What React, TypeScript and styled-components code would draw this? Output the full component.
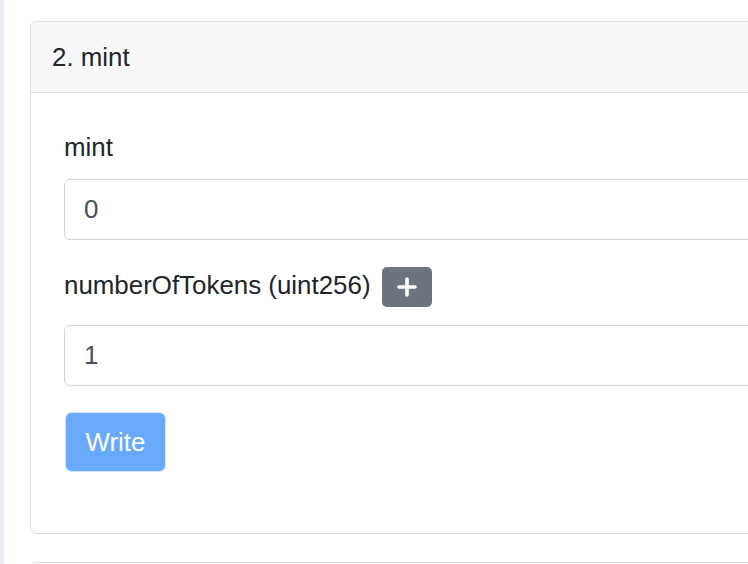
import React from "react";
import styled, { createGlobalStyle } from "styled-components";

const Global = createGlobalStyle`
  html, body {
    margin: 0;
    padding: 0;
    background: #ffffff;
    overflow: hidden;
  }
  body {
    font-family: "Liberation Sans", Arial, Helvetica, sans-serif;
    color: #212529;
  }
  * { box-sizing: border-box; }
`;

const Page = styled.div`
  display: flex;
  flex-direction: column;
  width: 1000px;
  min-height: 564px;
  border-left: 4px solid #eceef6;
  padding: 21px 0 0 26px;
`;

const Card = styled.section<{ $minHeight?: number }>`
  width: 900px;
  min-height: ${(p) => (p.$minHeight ? `${p.$minHeight}px` : "0")};
  border: 1px solid #dfdfdf;
  border-radius: 6px;
  margin-bottom: 28px;
  background: #ffffff;
  overflow: hidden;
`;

const CardHeader = styled.header`
  padding: 16px 21px;
  font-size: 25.9px;
  line-height: 38px;
  background: #f7f8fa;
  border-bottom: 1px solid #dfdfdf;
  color: #212529;
`;

const CardBody = styled.div`
  padding: 35px 33px 61px 33px;
`;

const Label = styled.label`
  display: block;
  font-size: 25.9px;
  line-height: 38px;
  margin-bottom: 13px;
  color: #212529;
`;

const LabelRow = styled.div`
  display: flex;
  align-items: flex-start;
  gap: 11px;
  margin-bottom: 18px;
`;

const LabelText = styled.span`
  font-size: 25.9px;
  line-height: 38px;
  color: #212529;
`;

const AddButton = styled.button`
  display: flex;
  align-items: center;
  justify-content: center;
  width: 50px;
  height: 40px;
  margin-top: 1px;
  padding: 0;
  border: none;
  border-radius: 5px;
  background: #6c757d;
  cursor: pointer;
`;

const Input = styled.input`
  display: block;
  width: 100%;
  height: 61px;
  padding: 0 19px;
  border: 1px solid #ced4da;
  border-radius: 6px;
  font-family: "Liberation Sans", Arial, Helvetica, sans-serif;
  font-size: 25.9px;
  color: #495057;
  background: #ffffff;
  margin-bottom: 26px;
  outline: none;
`;

const WriteButton = styled.button`
  height: 60px;
  margin-left: 1px;
  padding: 0 19.5px;
  border: 1px solid #d4e5fd;
  border-radius: 6px;
  background: #69a9fc;
  background-clip: padding-box;
  color: #ffffff;
  font-family: "Liberation Sans", Arial, Helvetica, sans-serif;
  font-size: 25.9px;
  line-height: 38px;
  cursor: default;
`;

const PlusIcon = () => (
  <svg width="20" height="20" viewBox="0 0 20 20" aria-hidden="true">
    <path d="M10 2v16M2 10h16" stroke="#ffffff" strokeWidth="3.6" strokeLinecap="round" />
  </svg>
);

export default function App() {
  return (
    <>
      <Global />
      <Page>
        <Card>
          <CardHeader>2. mint</CardHeader>
          <CardBody>
            <Label>mint</Label>
            <Input defaultValue="0" readOnly />
            <LabelRow>
              <LabelText>numberOfTokens (uint256)</LabelText>
              <AddButton type="button" aria-label="add">
                <PlusIcon />
              </AddButton>
            </LabelRow>
            <Input defaultValue="1" />
            <WriteButton type="button">Write</WriteButton>
          </CardBody>
        </Card>
        <Card $minHeight={72} />
      </Page>
    </>
  );
}
